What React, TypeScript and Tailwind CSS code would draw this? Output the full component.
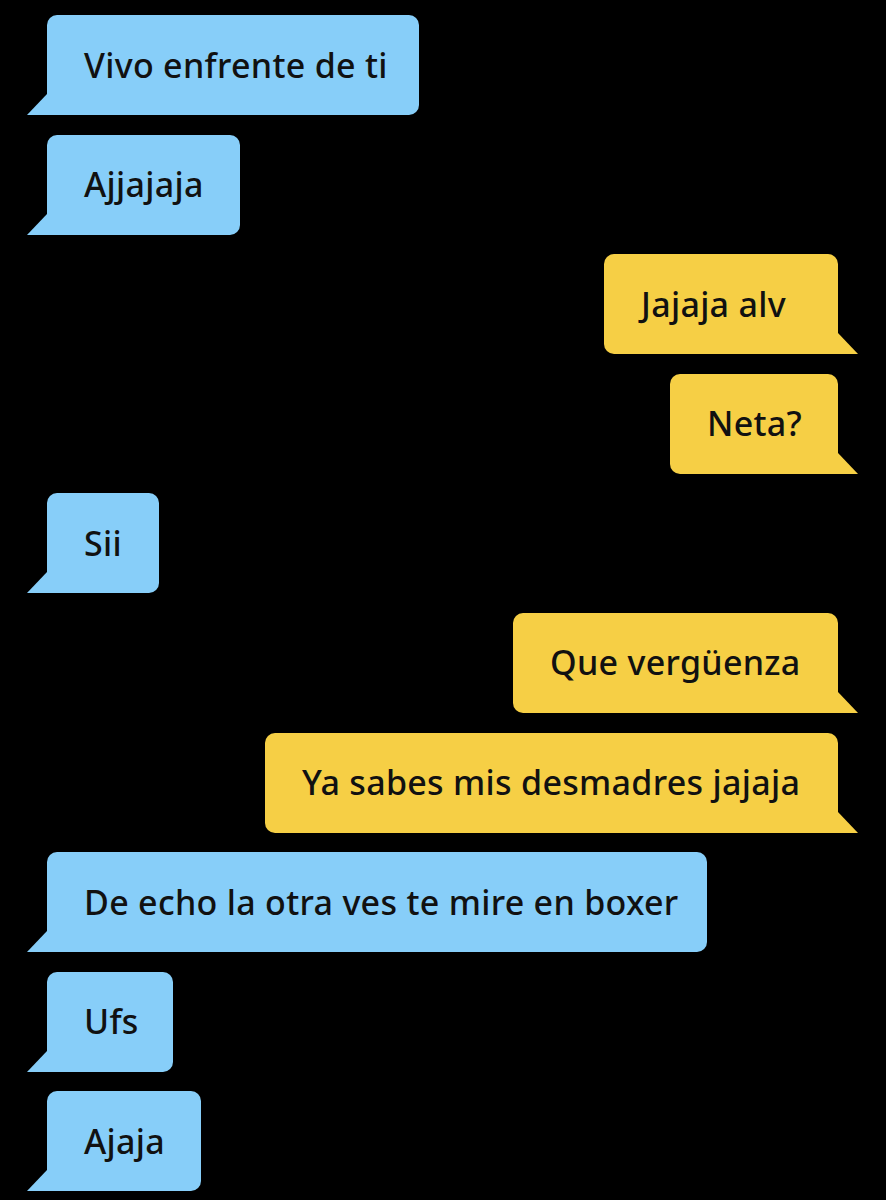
type Msg = { text: string; me: boolean; w: number };

const messages: Msg[] = [
  { text: 'Vivo enfrente de ti', me: false, w: 372 },
  { text: 'Ajjajaja', me: false, w: 193 },
  { text: 'Jajaja alv', me: true, w: 234 },
  { text: 'Neta?', me: true, w: 168 },
  { text: 'Sii', me: false, w: 112 },
  { text: 'Que vergüenza', me: true, w: 325 },
  { text: 'Ya sabes mis desmadres jajaja', me: true, w: 573 },
  { text: 'De echo la otra ves te mire en boxer', me: false, w: 660 },
  { text: 'Ufs', me: false, w: 126 },
  { text: 'Ajaja', me: false, w: 154 },
];

const Tail = ({ right }: { right: boolean }) => (
  <svg width="20" height="21" viewBox="0 0 20 21" className="shrink-0 block">
    {right ? (
      <polygon points="0,0 20,21 0,21" fill="#f6cf45" />
    ) : (
      <polygon points="20,0 20,21 0,21" fill="#87cef9" />
    )}
  </svg>
);

const Bubble = ({ m }: { m: Msg }) => (
  <div className={`flex items-end ${m.me ? 'justify-end' : 'justify-start'}`}>
    {!m.me && <Tail right={false} />}
    <div
      style={{ width: m.w }}
      className={`h-[100px] flex items-center pl-[37px] text-[34px] tracking-[0.3px] font-medium text-[#111] whitespace-nowrap ${
        m.me ? 'bg-[#f6cf45] rounded-[10px] rounded-br-none' : 'bg-[#87cef9] rounded-[10px] rounded-bl-none'
      }`}
    >
      {m.text}
    </div>
    {m.me && <Tail right={true} />}
  </div>
);

export default function App() {
  return (
    <div
      className="w-[886px] h-[1200px] bg-black pt-[15px] pl-[27px] pr-[28px] flex flex-col gap-[19.6px] overflow-hidden"
      style={{ fontFamily: '"Noto Sans", "Open Sans", sans-serif' }}
    >
      {messages.map((m, i) => (
        <Bubble key={i} m={m} />
      ))}
    </div>
  );
}
